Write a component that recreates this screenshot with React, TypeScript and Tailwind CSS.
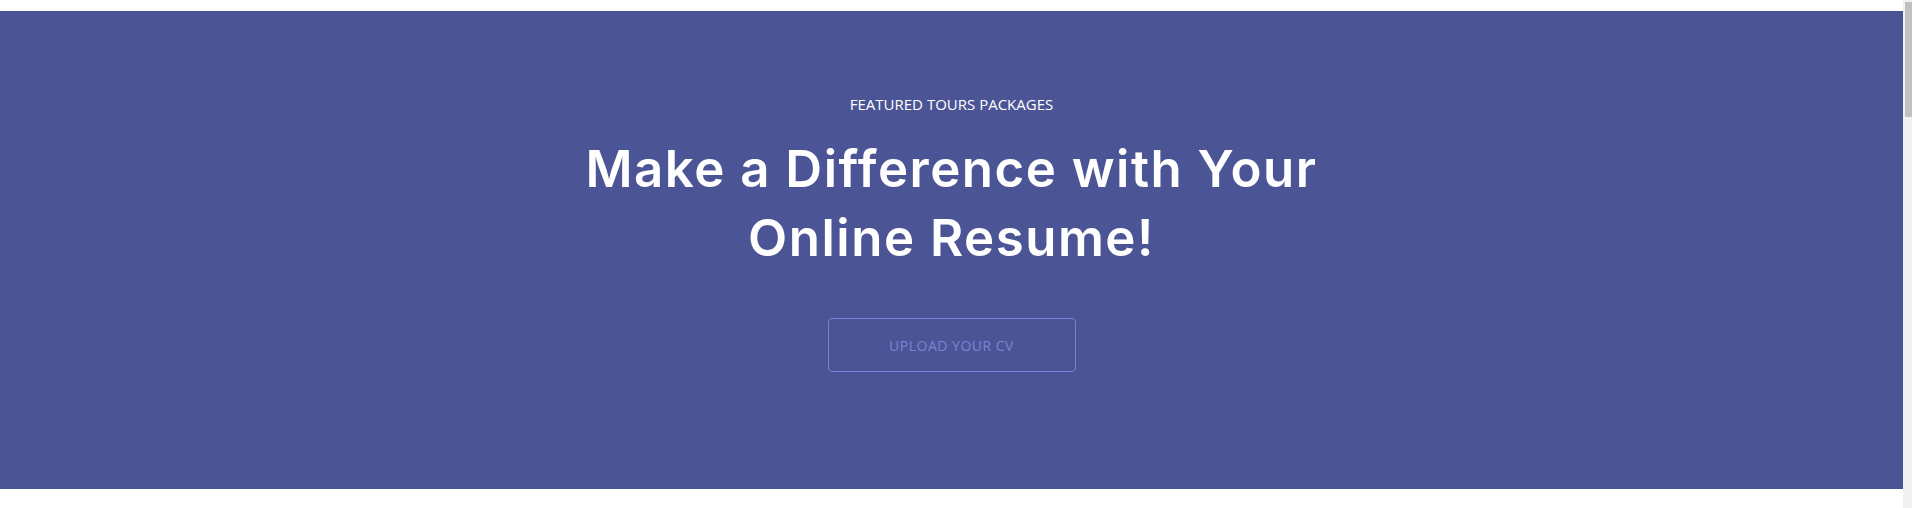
export default function App() {
  return (
    <div className="flex h-screen overflow-hidden bg-white">
      <main className="flex-1 pt-[11px]" style={{ fontFamily: '"Inter", "Lato", sans-serif' }}>
        <section className="h-[478px] bg-[#4b5595] flex flex-col items-center pt-[81px]">
          <p
            className="text-[15px] leading-6 text-white uppercase"
            style={{ fontFamily: '"Open Sans", sans-serif' }}
          >
            Featured Tours Packages
          </p>
          <h1 className="mt-[18px] text-center text-[51px] leading-[69px] font-semibold tracking-[1.5px] text-white">
            Make a Difference with Your
            <br />
            Online Resume!
          </h1>
          <button
            className="mt-[46px] w-[248px] h-[54px] rounded-[4px] border border-[#7a84d6] text-[14px] tracking-[0.5px] text-[#7a84d6] uppercase"
            style={{ fontFamily: '"Open Sans", sans-serif' }}
          >
            Upload your CV
          </button>
        </section>
      </main>
      <div className="w-[9px] bg-[#f1f1f1] pl-[2px] pt-[2px]">
        <div className="h-[115px] bg-[#c1c1c1]" />
      </div>
    </div>
  );
}
